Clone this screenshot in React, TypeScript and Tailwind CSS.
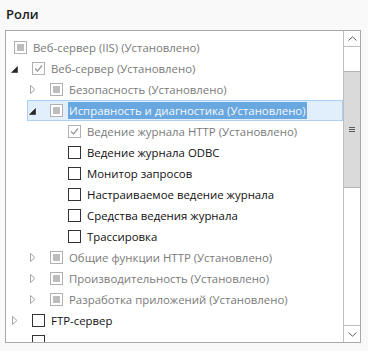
import React from "react";

type Exp = "open" | "closed" | null;
type Chk = "partial" | "checked" | "empty";

interface Item {
  level: number;
  exp: Exp;
  chk: Chk;
  label: string;
  gray?: boolean;
  selected?: boolean;
}

const items: Item[] = [
  { level: 0, exp: null, chk: "partial", label: "Веб-сервер (IIS) (Установлено)", gray: true },
  { level: 1, exp: "open", chk: "checked", label: "Веб-сервер (Установлено)", gray: true },
  { level: 2, exp: "closed", chk: "partial", label: "Безопасность (Установлено)", gray: true },
  { level: 2, exp: "open", chk: "partial", label: "Исправность и диагностика (Установлено)", selected: true },
  { level: 3, exp: null, chk: "checked", label: "Ведение журнала HTTP (Установлено)", gray: true },
  { level: 3, exp: null, chk: "empty", label: "Ведение журнала ODBC" },
  { level: 3, exp: null, chk: "empty", label: "Монитор запросов" },
  { level: 3, exp: null, chk: "empty", label: "Настраиваемое ведение журнала" },
  { level: 3, exp: null, chk: "empty", label: "Средства ведения журнала" },
  { level: 3, exp: null, chk: "empty", label: "Трассировка" },
  { level: 2, exp: "closed", chk: "partial", label: "Общие функции HTTP (Установлено)", gray: true },
  { level: 2, exp: "closed", chk: "partial", label: "Производительность (Установлено)", gray: true },
  { level: 2, exp: "closed", chk: "partial", label: "Разработка приложений (Установлено)", gray: true },
  { level: 1, exp: "closed", chk: "empty", label: "FTP-сервер" },
  { level: 1, exp: null, chk: "empty", label: "" },
];

const indentClass = ["w-0", "w-[18px]", "w-[36px]", "w-[54px]"];

function Expander({ kind }: { kind: Exp }) {
  if (kind === "open") {
    return (
      <svg width="7" height="7" viewBox="0 0 7 7" className="-ml-[2px] mt-[1px]">
        <polygon points="6.5,0.5 6.5,6.5 0.5,6.5" fill="#262626" stroke="#262626" strokeWidth="0.6" />
      </svg>
    );
  }
  if (kind === "closed") {
    return (
      <svg width="6" height="9" viewBox="0 0 6 9" className="-ml-[1px]">
        <polygon points="0.5,0.5 5,4.5 0.5,8.5" fill="none" stroke="#a6a6a6" strokeWidth="1" />
      </svg>
    );
  }
  return null;
}

function CheckBox({ kind }: { kind: Chk }) {
  if (kind === "empty") {
    return <div className="h-[13px] w-[13px] shrink-0 border border-[#333333] bg-white" />;
  }
  if (kind === "partial") {
    return (
      <div className="flex h-[13px] w-[13px] shrink-0 items-center justify-center border border-[#b1b1b1] bg-white">
        <div className="h-[7px] w-[7px] bg-[#bdbdbd]" />
      </div>
    );
  }
  return (
    <div className="flex h-[13px] w-[13px] shrink-0 items-center justify-center border border-[#b1b1b1] bg-white">
      <svg width="9" height="9" viewBox="0 0 9 9">
        <polyline points="1,4.5 3.5,7 8,1.5" fill="none" stroke="#9b9b9b" strokeWidth="1.3" />
      </svg>
    </div>
  );
}

function Row({ it }: { it: Item }) {
  return (
    <div className="relative flex h-[21px] shrink-0 items-center">
      {it.selected && (
        <div className="absolute bottom-0 left-[21px] right-0 top-0 border border-[#a9d0f2] bg-[#e1eefb]" />
      )}
      <div className={`relative flex h-full shrink-0 justify-end ${indentClass[it.level]}`}>
        {it.level > 0 && (
          <div className="flex h-full w-[18px] items-center justify-center">
            <Expander kind={it.exp} />
          </div>
        )}
      </div>
      <div className="relative ml-[8px] flex items-center">
        <CheckBox kind={it.chk} />
        {it.label && (
          <span
            className={`whitespace-nowrap leading-[17px] ${
              it.selected
                ? "ml-[5px] bg-[#68a7e0] px-px text-[#f4f8fc]"
                : it.gray
                ? "ml-[6px] text-[#7a7a7a]"
                : "ml-[6px] text-[#111111]"
            }`}
          >
            {it.label}
          </span>
        )}
      </div>
    </div>
  );
}

function Chevron({ up }: { up: boolean }) {
  return (
    <svg width="9" height="5" viewBox="0 0 9 5">
      <polyline
        points={up ? "0.5,4.5 4.5,0.8 8.5,4.5" : "0.5,0.5 4.5,4.2 8.5,0.5"}
        fill="none"
        stroke="#5f5f5f"
        strokeWidth="1"
      />
    </svg>
  );
}

export default function App() {
  return (
    <div
      className="h-[351px] w-[368px] overflow-hidden bg-[#f9f9f9] text-[11.4px]"
      style={{ fontFamily: '"Open Sans", "Noto Sans", sans-serif' }}
    >
      <div className="flex h-[30px] items-start pl-[6px] pt-[5px]">
        <span className="text-[13px] font-semibold leading-[18px] text-[#1b1b1b]">Роли</span>
      </div>
      <div className="ml-[5px] flex h-[313px] w-[356px] border border-[#a9a9a9] bg-white">
        <div className="flex min-w-0 flex-1 flex-col overflow-hidden pt-[6px]">
          {items.map((it, i) => (
            <Row key={i} it={it} />
          ))}
        </div>
        <div className="flex w-[17px] shrink-0 flex-col border-l border-[#bdbdbd]">
          <div className="flex h-[16px] shrink-0 items-center justify-center border-b border-[#bdbdbd]">
            <Chevron up />
          </div>
          <div className="h-[24px] shrink-0" />
          <div className="flex h-[117px] shrink-0 items-center justify-center border-y border-[#b3b3b3] bg-[#dadada]">
            <div className="flex flex-col gap-[1px]">
              <div className="h-px w-[6px] bg-[#5a5a5a]" />
              <div className="h-px w-[6px] bg-[#5a5a5a]" />
              <div className="h-px w-[6px] bg-[#5a5a5a]" />
            </div>
          </div>
          <div className="flex-1" />
          <div className="flex h-[17px] shrink-0 items-center justify-center border-t border-[#bdbdbd]">
            <Chevron up={false} />
          </div>
        </div>
      </div>
    </div>
  );
}
